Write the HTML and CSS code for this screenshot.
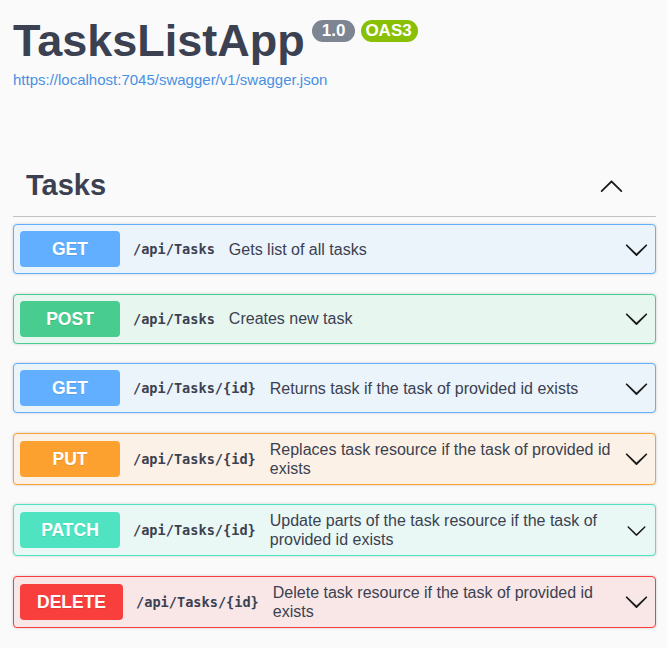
FILE: index.html
```html
<!DOCTYPE html>
<html lang="en">
<head>
<meta charset="utf-8">
<title>TasksListApp</title>
<link rel="stylesheet" href="styles.css">
</head>
<body>
<svg class="defs" width="0" height="0" aria-hidden="true">
  <symbol id="arrow-down" viewBox="0 0 20 20"><path d="M17.418 6.109c.272-.268.709-.268.979 0s.271.701 0 .969l-7.908 7.83c-.27.268-.707.268-.979 0l-7.908-7.830c-.27-.268-.27-.701 0-.969.271-.268.709-.268.979 0L10 13.25l7.418-7.141z"/></symbol>
  <symbol id="arrow-up" viewBox="0 0 20 20"><path d="M17.418 14.908c.272.268.709.268.979 0s.271-.701 0-.969l-7.908-7.83a.697.697 0 0 0-.979 0l-7.908 7.83c-.27.268-.27.701 0 .969.271.268.709.268.979 0L10 7.773l7.418 7.135z"/></symbol>
</svg>
<div class="page">
  <div class="info">
    <h1 class="title"><span class="title-text">TasksListApp</span><span class="badge badge-version">1.0</span><span class="badge badge-oas">OAS3</span></h1>
    <a class="base-url" href="#">https://localhost:7045/swagger/v1/swagger.json</a>
  </div>
  <section class="tag">
    <div class="tag-header">
      <h2 class="tag-title">Tasks</h2>
      <svg class="chev"><use href="#arrow-up"/></svg>
    </div>
    <div class="op op-get">
      <span class="method">GET</span>
      <span class="path">/api/Tasks</span>
      <span class="desc">Gets list of all tasks</span>
      <svg class="chev"><use href="#arrow-down"/></svg>
    </div>
    <div class="op op-post">
      <span class="method">POST</span>
      <span class="path">/api/Tasks</span>
      <span class="desc">Creates new task</span>
      <svg class="chev"><use href="#arrow-down"/></svg>
    </div>
    <div class="op op-get">
      <span class="method">GET</span>
      <span class="path">/api/Tasks/{id}</span>
      <span class="desc">Returns task if the task of provided id exists</span>
      <svg class="chev"><use href="#arrow-down"/></svg>
    </div>
    <div class="op op-put">
      <span class="method">PUT</span>
      <span class="path">/api/Tasks/{id}</span>
      <span class="desc">Replaces task resource if the task of provided id exists</span>
      <svg class="chev"><use href="#arrow-down"/></svg>
    </div>
    <div class="op op-patch">
      <span class="method">PATCH</span>
      <span class="path">/api/Tasks/{id}</span>
      <span class="desc">Update parts of the task resource if the task of provided id exists</span>
      <svg class="chev chev-sm"><use href="#arrow-down"/></svg>
    </div>
    <div class="op op-delete">
      <span class="method">DELETE</span>
      <span class="path">/api/Tasks/{id}</span>
      <span class="desc">Delete task resource if the task of provided id exists</span>
      <svg class="chev"><use href="#arrow-down"/></svg>
    </div>
  </section>
</div>
</body>
</html>
```
FILE: styles.css
```css
body {
  margin: 0;
  background: #fafafa;
  font-family: "Liberation Sans", Arial, sans-serif;
  color: #3b4151;
}

.defs {
  position: absolute;
  width: 0;
  height: 0;
  overflow: hidden;
}

.page {
  padding: 0 11px 0 13px;
}

.info {
  padding-top: 15px;
}

.title {
  margin: 0;
  display: flex;
  align-items: flex-start;
  gap: 6px;
  font-size: 45px;
  line-height: 52px;
  font-weight: 700;
}

.title-text {
  margin-right: 1px;
}

.badge {
  margin-top: 5px;
  font-size: 17px;
  line-height: 18px;
  padding: 2px 5px;
  border-radius: 57px;
  color: #fff;
  font-weight: 700;
}

.badge-version {
  background: #7d8492;
  padding: 2px 10px;
}

.badge-oas {
  background: #89bf04;
  padding: 2px 6px 2px 4px;
}

.base-url {
  display: block;
  margin-top: 4px;
  font-size: 15px;
  line-height: 18px;
  color: #4990e2;
  text-decoration: none;
}

.tag {
  margin-top: 66px;
}

.tag-header {
  display: flex;
  align-items: center;
  padding: 12px 32px 13px 13px;
  border-bottom: 1px solid rgba(59, 65, 81, 0.3);
  margin-bottom: 7px;
}

.tag-title {
  flex: 1;
  margin: 0;
  font-size: 29px;
  line-height: 36px;
  font-weight: 700;
}

.chev {
  flex: none;
  width: 25px;
  height: 25px;
  fill: #1a1a1a;
}

.chev-sm {
  width: 21px;
  height: 21px;
  margin-right: 2px;
}

.op {
  display: flex;
  align-items: center;
  padding: 6px;
  border: 1px solid;
  border-radius: 4px;
  box-shadow: 0 0 3px rgba(0, 0, 0, 0.19);
  margin-bottom: 19.6px;
}

.method {
  flex: none;
  min-width: 100px;
  box-sizing: border-box;
  padding: 0 17px;
  height: 36px;
  line-height: 36px;
  text-align: center;
  border-radius: 4px;
  font-size: 17.5px;
  font-weight: 700;
  color: #fff;
  text-shadow: 0 1px 0 rgba(0, 0, 0, 0.1);
}

.path {
  flex: none;
  padding-left: 13px;
  font-family: "DejaVu Sans Mono", "Liberation Mono", monospace;
  font-weight: 700;
  font-size: 13.6px;
  color: #3b4151;
}

.desc {
  flex: 1;
  padding: 0 5px 0 14px;
  font-size: 16px;
  line-height: 19px;
  color: #3b4151;
}

.op-get { background: #ebf3fb; border-color: #61affe; }
.op-get .method { background: #61affe; }

.op-post { background: #e8f6f0; border-color: #49cc90; }
.op-post .method { background: #49cc90; }

.op-put { background: #fbf1e6; border-color: #fca130; }
.op-put .method { background: #fca130; }

.op-patch { background: #e9f8f5; border-color: #50e3c2; }
.op-patch .method { background: #50e3c2; }

.op-delete { background: #f9e6e6; border-color: #f93e3e; }
.op-delete .method { background: #f93e3e; }
```
